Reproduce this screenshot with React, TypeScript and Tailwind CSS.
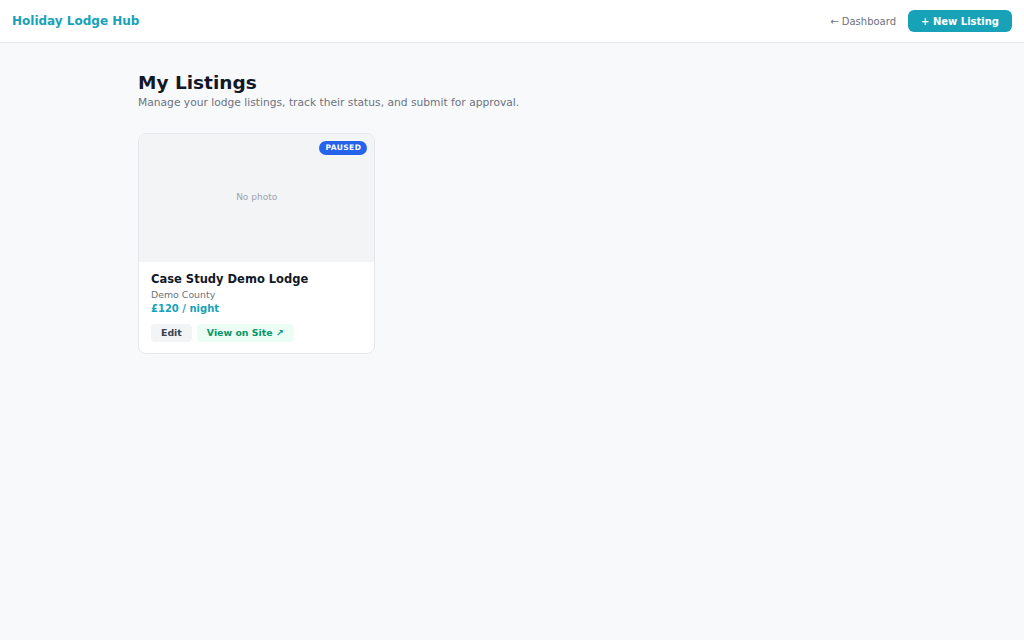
import React from 'react';

export default function App() {
  return (
    <div
      className="min-h-screen bg-[#f8f9fb] text-[#111827]"
      style={{ fontFamily: '"DejaVu Sans", "Liberation Sans", sans-serif' }}
    >
      {/* Top bar */}
      <header className="h-[43px] bg-white border-b border-[#e5e7eb] flex items-center justify-between px-3">
        <div className="text-[12px] font-bold text-[#17a2b8]">Holiday Lodge Hub</div>
        <div className="flex items-center gap-3">
          <a className="text-[10px] text-[#6b7280]">← Dashboard</a>
          <button className="h-[22px] px-[13px] rounded-md bg-[#17a2b8] text-white text-[10px] font-bold">
            + New Listing
          </button>
        </div>
      </header>

      <main className="max-w-[748px] mx-auto pt-[29px]">
        <h1 className="text-[18.5px] font-bold leading-[22px] text-[#111827]">My Listings</h1>
        <p className="text-[10.7px] text-[#6b7280] mt-[1px]">
          Manage your lodge listings, track their status, and submit for approval.
        </p>

        <div className="grid grid-cols-3 gap-[18px] mt-[22px]">
          <div className="bg-white border border-[#e5e7eb] rounded-lg overflow-hidden">
            <div className="relative h-[128px] bg-[#f3f4f6] flex items-center justify-center">
              <span className="text-[9px] text-[#9ca3af]">No photo</span>
              <span className="absolute top-[7px] right-[7px] bg-[#2563eb] text-white text-[7.5px] font-bold tracking-[0.06em] rounded-full px-[6px] h-[14px] flex items-center">
                PAUSED
              </span>
            </div>
            <div className="px-[12px] pt-[9px] pb-[11px]">
              <div className="text-[11.5px] font-bold leading-[16px] text-[#111827]">Case Study Demo Lodge</div>
              <div className="text-[9.4px] text-[#6b7280] leading-[14px] mt-[1px]">Demo County</div>
              <div className="text-[10px] font-bold text-[#17a2b8] leading-[14px]">£120 / night</div>
              <div className="flex gap-[5px] mt-[8px]">
                <button className="h-[18px] px-[10px] rounded bg-[#f3f4f6] text-[9.4px] font-bold text-[#374151]">
                  Edit
                </button>
                <button className="h-[18px] px-[10px] rounded bg-[#ecfdf5] text-[9.4px] font-bold text-[#059669]">
                  View on Site ↗
                </button>
              </div>
            </div>
          </div>
        </div>
      </main>
    </div>
  );
}
